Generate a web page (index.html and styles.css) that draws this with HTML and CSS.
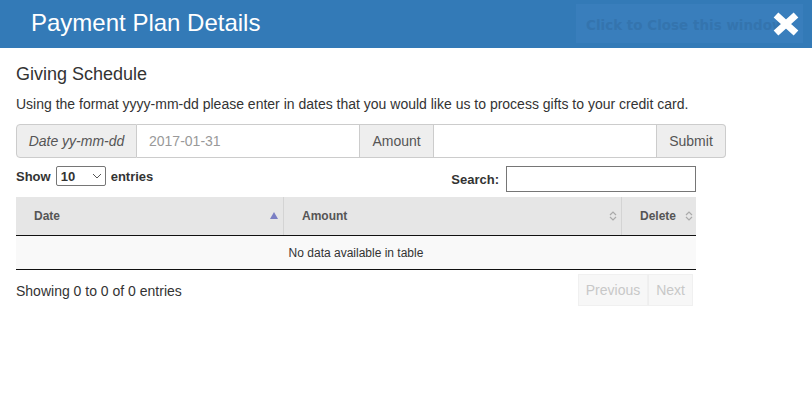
FILE: index.html
```html
<!DOCTYPE html>
<html>
<head>
<meta charset="utf-8">
<link rel="stylesheet" href="styles.css">
</head>
<body>
<div class="header">
  <div class="title">Payment Plan Details</div>
  <div class="close-box">
    <span class="close-text">Click to Close this window</span>
    <svg class="close-x" width="28" height="26" viewBox="0 0 28 26"><path d="M4 4 L24 22 M24 4 L4 22" stroke="#fff" stroke-width="7" stroke-linecap="butt"/></svg>
  </div>
</div>
<div class="content">
  <h3 class="section-title">Giving Schedule</h3>
  <p class="intro">Using the format yyyy-mm-dd please enter in dates that you would like us to process gifts to your credit card.</p>
  <div class="input-group">
    <span class="addon addon-first"><i>Date yy-mm-dd</i></span>
    <span class="field field-date">2017-01-31</span>
    <span class="addon addon-mid">Amount</span>
    <span class="field field-amount"></span>
    <span class="addon addon-last">Submit</span>
  </div>
  <div class="dt">
    <div class="dt-top">
      <div class="length">Show <span class="select">10 <svg width="10" height="6" viewBox="0 0 10 6"><path d="M1 1 L5 5 L9 1" fill="none" stroke="#555" stroke-width="1"/></svg></span> entries</div>
      <div class="search">Search: <span class="search-input"></span></div>
    </div>
    <div class="table">
      <div class="thead">
        <div class="th th-date">Date <svg class="sort" width="8" height="8" viewBox="0 0 8 8"><path d="M0 7 L4 0 L8 7 Z" fill="#7b7fc4"/></svg></div>
        <div class="th th-amount">Amount <svg class="sort" width="8" height="10" viewBox="0 0 8 10"><path d="M1 4 L4 1 L7 4 M1 6 L4 9 L7 6" fill="none" stroke="#aaa" stroke-width="1.2"/></svg></div>
        <div class="th th-delete">Delete <svg class="sort" width="8" height="10" viewBox="0 0 8 10"><path d="M1 4 L4 1 L7 4 M1 6 L4 9 L7 6" fill="none" stroke="#aaa" stroke-width="1.2"/></svg></div>
      </div>
      <div class="empty-row">No data available in table</div>
    </div>
    <div class="dt-bottom">
      <div class="info">Showing 0 to 0 of 0 entries</div>
      <div class="paging"><span class="pbtn">Previous</span><span class="pbtn">Next</span></div>
    </div>
  </div>
</div>
</body>
</html>
```
FILE: styles.css
```css
html, body {
  margin: 0;
  padding: 0;
  background: #fff;
  font-family: "Liberation Sans", Arial, sans-serif;
  color: #333;
  font-size: 14px;
}
.header {
  height: 48px;
  background: #337ab7;
  display: flex;
  align-items: center;
  justify-content: space-between;
  padding-left: 31px;
  padding-right: 9px;
}
.title {
  color: #fff;
  font-size: 24px;
  line-height: 1;
  margin-top: -2px;
}
.close-box {
  position: relative;
  width: 227px;
  height: 39px;
  margin-top: -2px;
  background: #397ebc;
  display: flex;
  align-items: center;
  padding: 0 0 0 10px;
  box-sizing: border-box;
}
.close-text {
  font-family: "DejaVu Sans", Verdana, sans-serif;
  font-weight: bold;
  font-size: 13.5px;
  color: #3474ae;
  white-space: nowrap;
  margin-top: 3px;
}
.close-x {
  position: absolute;
  right: 3px;
  top: 7px;
}
.content {
  padding: 0 16px;
}
.section-title {
  font-size: 18px;
  font-weight: normal;
  margin: 15px 0 0;
  line-height: 22px;
}
.intro {
  margin: 9px 0 0;
  font-size: 14px;
  line-height: 20px;
}
.input-group {
  display: flex;
  width: 710px;
  height: 34px;
  margin-top: 10px;
  box-sizing: border-box;
}
.addon, .field {
  box-sizing: border-box;
  height: 34px;
  display: flex;
  align-items: center;
  border: 1px solid #ccc;
  font-size: 14px;
  white-space: nowrap;
}
.addon {
  background: #eee;
  color: #555;
  padding: 0 6px;
  justify-content: center;
}
.addon + .field, .field + .addon {
  border-left: none;
}
.addon-first {
  width: 121px;
  border-radius: 4px 0 0 4px;
}
.addon-mid { width: 74px; }
.addon-last {
  width: 69px;
  border-radius: 0 4px 4px 0;
}
.field {
  background: #fff;
  color: #999;
  padding: 0 12px;
}
.field-date { width: 223px; }
.field-amount { width: 223px; }
.dt {
  width: 680px;
  margin-top: 8px;
}
.dt-top {
  display: flex;
  justify-content: space-between;
  align-items: flex-start;
  font-weight: bold;
  font-size: 13px;
  color: #333;
  height: 31px;
}
.length {
  display: flex;
  align-items: center;
  gap: 4px;
  margin-top: 0;
}
.select {
  display: inline-flex;
  align-items: center;
  justify-content: space-between;
  width: 50px;
  height: 20px;
  box-sizing: border-box;
  border: 1px solid #767676;
  border-radius: 2px;
  padding: 0 3px 0 4px;
  font-weight: bold;
  margin: 0 1px;
}
.search {
  display: flex;
  align-items: center;
  gap: 7px;
  margin-top: 0;
}
.search-input {
  display: inline-block;
  width: 190px;
  height: 26px;
  box-sizing: border-box;
  border: 1px solid #767676;
}
.table {
  width: 680px;
}
.thead {
  display: flex;
  height: 39px;
  background: #e6e6e6;
  border-bottom: 1px solid #111;
  box-sizing: border-box;
}
.th {
  display: flex;
  align-items: center;
  justify-content: space-between;
  font-weight: bold;
  font-size: 12px;
  color: #555;
  box-sizing: border-box;
  padding: 0 6px 0 18px;
}
.th-date { width: 268px; border-right: 1px solid #d4d4d4; padding-right: 5px; }
.th-amount { width: 338px; border-right: 1px solid #d4d4d4; padding-right: 4px; }
.th-delete { width: 74px; padding: 0 3px 0 18px; }
.th-delete .sort { margin-left: 4px; }
.empty-row {
  height: 34px;
  background: #f9f9f9;
  border-bottom: 1px solid #111;
  box-sizing: border-box;
  display: flex;
  align-items: center;
  justify-content: center;
  font-size: 12px;
  color: #333;
}
.dt-bottom {
  display: flex;
  justify-content: space-between;
  align-items: flex-start;
  margin-top: 4px;
}
.info {
  font-size: 14px;
  margin-top: 9px;
}
.paging {
  display: flex;
  margin-right: 3px;
}
.pbtn {
  height: 32px;
  display: flex;
  align-items: center;
  padding: 0 7px;
  background: #f7f7f7;
  color: #c8c8c8;
  font-size: 14px;
  border: 1px solid #f0f0f0;
  box-sizing: border-box;
}
.pbtn + .pbtn { border-left: 1px solid #eee; }
```
